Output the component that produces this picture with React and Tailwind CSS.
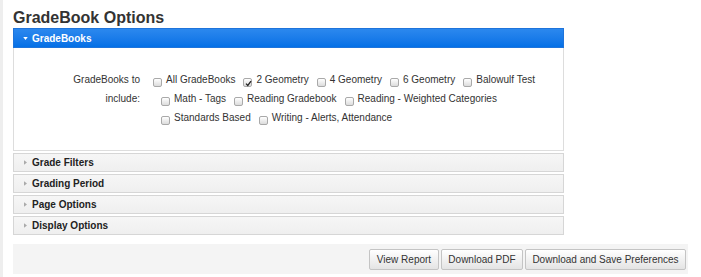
import React from 'react';

const font = { fontFamily: '"Liberation Sans", Arial, sans-serif' };

const Box = ({ checked }) => (
  <span className="relative inline-block w-[9px] h-[9px] mr-[4px] translate-y-[3px] rounded-[2px] border border-[#a9a9a9] bg-gradient-to-b from-[#ffffff] to-[#dcdcdc] shrink-0">
    {checked && (
      <svg viewBox="0 0 9 9" className="absolute left-0 top-0 w-[9px] h-[9px]">
        <path d="M2 4.6 L3.8 6.4 L7 2.2" fill="none" stroke="#222" strokeWidth="1.3" />
      </svg>
    )}
  </span>
);

const Item = ({ label, checked }) => (
  <label className="flex items-center mr-[8px] whitespace-nowrap">
    <Box checked={checked} />
    <span>{label}</span>
  </label>
);

const rows = [
  [['All GradeBooks'], ['2 Geometry', true], ['4 Geometry'], ['6 Geometry'], ['Balowulf Test']],
  [['Math - Tags'], ['Reading Gradebook'], ['Reading - Weighted Categories']],
  [['Standards Based'], ['Writing - Alerts, Attendance']],
];

const Collapsed = ({ title }) => (
  <div className="mt-[2px] h-[19px] flex items-center border border-[#d6d6d6] bg-gradient-to-b from-[#f6f6f6] to-[#efefef] text-[10px] font-bold text-[#222]">
    <svg viewBox="0 0 4 6" className="w-[3px] h-[5px] ml-[10px] mr-[5px]">
      <path d="M0 0 L4 3 L0 6 Z" fill="#aaa" />
    </svg>
    {title}
  </div>
);

const App = () => {
  return (
    <div className="flex h-[277px] bg-white text-[#333]" style={font}>
      <div className="w-[3px] bg-[#eeeeee]" />
      <div className="ml-[10px] flex-1">
        <h1 className="pt-[8px] text-[16px] leading-[19px] font-bold text-[#333]">GradeBook Options</h1>
        <div className="w-[551px] mt-[1px]">
          <div className="h-[20px] flex items-center bg-gradient-to-b from-[#2b88ee] to-[#0370e6] border border-[#1f74db] text-white text-[10px] font-bold">
            <svg viewBox="0 0 6 4" className="w-[5px] h-[3px] ml-[9px] mr-[4px]">
              <path d="M0 0 L6 0 L3 4 Z" fill="#fff" />
            </svg>
            GradeBooks
          </div>
          <div className="h-[103px] border-x border-b border-[#dddddd] flex pt-[22px] text-[10px] leading-[19px] text-[#333]">
            <div className="w-[126px] text-right">
              GradeBooks to
              <br />
              include:
            </div>
            <div className="ml-[13px] flex flex-col">
              {rows.map((row, i) => (
                <div key={i} className={'flex h-[19px] ' + (i === 0 ? '' : 'ml-[8px]')}>
                  {row.map(([l, c]) => (
                    <Item key={l} label={l} checked={c} />
                  ))}
                </div>
              ))}
            </div>
          </div>
          <Collapsed title="Grade Filters" />
          <Collapsed title="Grading Period" />
          <Collapsed title="Page Options" />
          <Collapsed title="Display Options" />
        </div>
        <div className="mt-[9px] w-[675px] h-[30px] bg-[#f4f4f4] flex items-center justify-end gap-[2px] pr-[2px]">
          {[['View Report', 'w-[70px]'], ['Download PDF', 'w-[82px]'], ['Download and Save Preferences', 'w-[161px]']].map(([t, w]) => (
            <button
              key={t}
              className={w + ' h-[21px] rounded-[2px] border border-[#c4c4c4] bg-gradient-to-b from-[#ffffff] to-[#e4e4e4] text-[10px] text-[#333] whitespace-nowrap'}
            >
              {t}
            </button>
          ))}
        </div>
      </div>
    </div>
  );
};

export default App;
